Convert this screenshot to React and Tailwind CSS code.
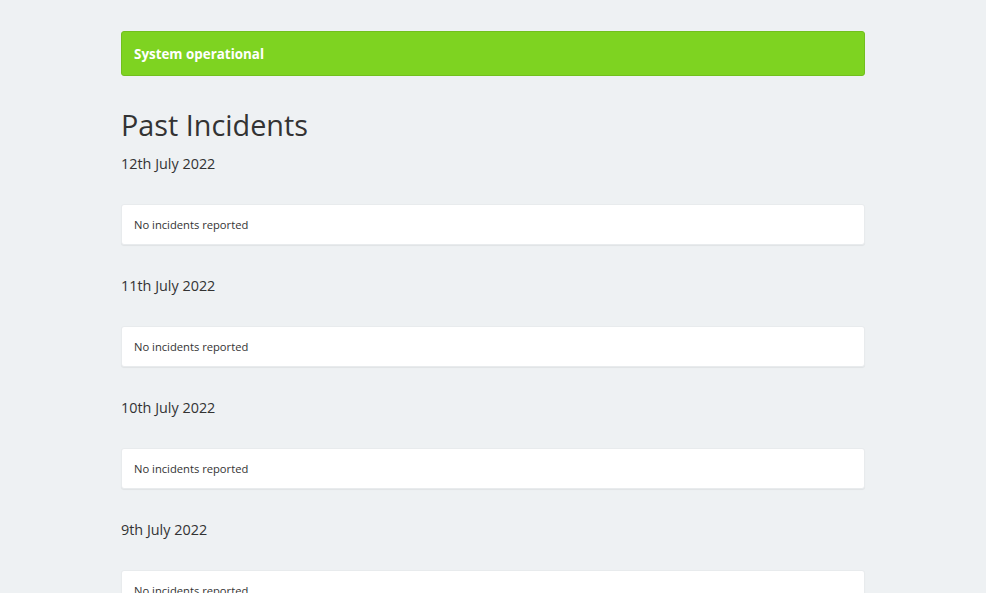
import React from 'react';

const days = ['12th July 2022', '11th July 2022', '10th July 2022', '9th July 2022', '8th July 2022'];

const App = () => (
  <div
    className="min-h-screen bg-[#eef1f3] text-[#333333]"
    style={{ fontFamily: '"Open Sans", "Noto Sans", sans-serif' }}
  >
    <div className="mx-auto w-[744px] pt-[31px]">
      <div className="h-[45px] flex items-center px-[12px] pt-[2px] rounded-[3px] border border-[#72bf1e] bg-[#7ed321] text-white text-[13.4px] font-bold">
        System operational
      </div>

      <h1 className="mt-[31px] text-[28.8px] leading-[36px] font-normal text-[#333333]">Past Incidents</h1>

      <div className="mt-[11px]">
        {days.map((day) => (
          <div key={day} className="mb-[31px]">
            <h4 className="text-[14.4px] leading-[20px] text-[#333333]">{day}</h4>
            <div className="mt-[30px] h-[41px] flex items-center px-[12px] pt-[2px] bg-white border border-[#e8ebed] rounded-[3px] shadow-[0_1px_1px_rgba(0,0,0,0.06)] text-[11.2px] text-[#333333]">
              No incidents reported
            </div>
          </div>
        ))}
      </div>
    </div>
  </div>
);

export default App;
